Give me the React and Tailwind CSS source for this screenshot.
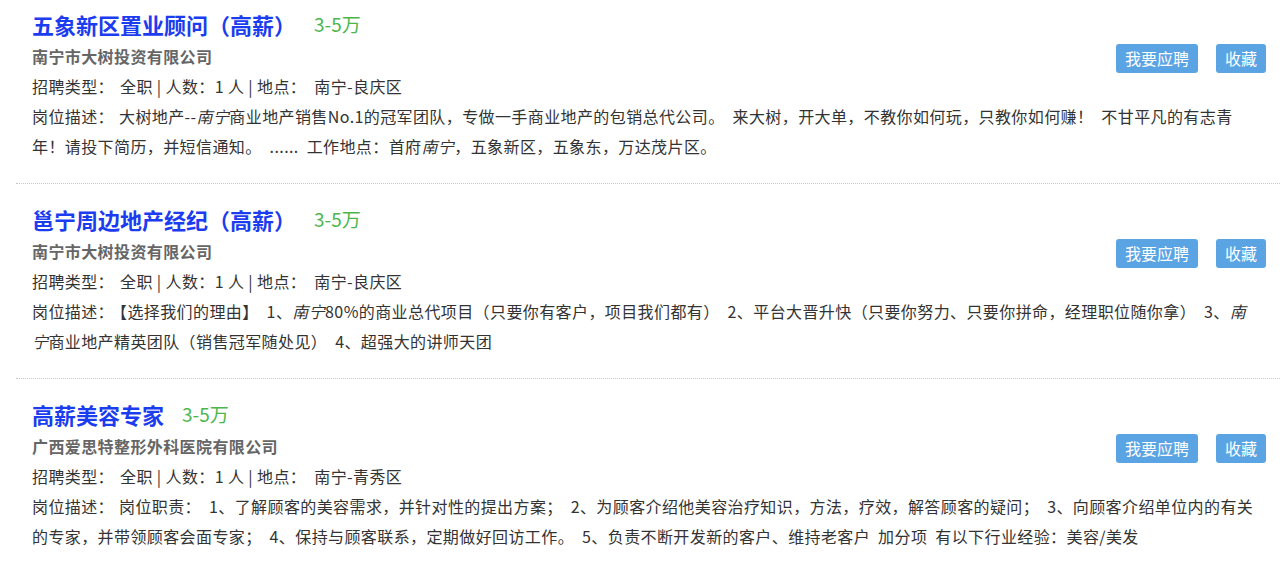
import React from 'react';

const JOBS = [
  {
    id: 1,
    title: '五象新区置业顾问（高薪）',
    salary: '3-5万',
    company: '南宁市大树投资有限公司',
    district: '南宁-良庆区',
    desc: [
      '大树地产--',
      { em: '南宁' },
      '商业地产销售No.1的冠军团队，专做一手商业地产的包销总代公司。 来大树，开大单，不教你如何玩，只教你如何赚！ 不甘平凡的有志青年！请投下简历，并短信通知。 ...... 工作地点：首府',
      { em: '南宁' },
      '，五象新区，五象东，万达茂片区。',
    ],
  },
  {
    id: 2,
    title: '邕宁周边地产经纪（高薪）',
    salary: '3-5万',
    company: '南宁市大树投资有限公司',
    district: '南宁-良庆区',
    desc: [
      '【选择我们的理由】 1、',
      { em: '南宁' },
      '80%的商业总代项目（只要你有客户，项目我们都有） 2、平台大晋升快（只要你努力、只要你拼命，经理职位随你拿） 3、',
      { em: '南宁' },
      '商业地产精英团队（销售冠军随处见） 4、超强大的讲师天团',
    ],
  },
  {
    id: 3,
    title: '高薪美容专家',
    salary: '3-5万',
    company: '广西爱思特整形外科医院有限公司',
    district: '南宁-青秀区',
    desc: [
      '岗位职责： 1、了解顾客的美容需求，并针对性的提出方案； 2、为顾客介绍他美容治疗知识，方法，疗效，解答顾客的疑问； 3、向顾客介绍单位内的有关的专家，并带领顾客会面专家； 4、保持与顾客联系，定期做好回访工作。 5、负责不断开发新的客户、维持老客户 加分项 有以下行业经验：美容/美发',
    ],
  },
];

function JobItem({ job, first }) {
  return (
    <li
      className={`border-b border-dotted border-[#c8c8c8] pl-4 pr-[14px] pb-[22px] ${
        first ? 'pt-[7px]' : 'pt-[18px]'
      }`}
    >
      <div className="flex justify-between">
        <div>
          <h3 className="flex items-center h-[34px]">
            <a href="#" className="text-[22px] font-bold text-[#1c3cf0] leading-[34px]">
              {job.title}
            </a>
            <span className="ml-[18px] text-[19px] text-[#4cb64c] leading-[34px]">{job.salary}</span>
          </h3>
          <p className="text-[16px] font-bold text-[#666] leading-[30px] tracking-[0.4px]">{job.company}</p>
          <p className="text-[16px] text-[#333] leading-[30px] tracking-[0.4px]">
            <span className="mr-[6px]">招聘类型：</span>
            <span className="mr-[8px]">全职 | 人数：1 人 | 地点：</span>
            <span>{job.district}</span>
          </p>
        </div>
        <div className="flex gap-[18px] pt-[37px]">
          <button
            type="button"
            className="h-[29px] px-[9px] rounded-[3px] bg-[#5ba4e4] text-white text-[16px] leading-[29px]"
          >
            我要应聘
          </button>
          <button
            type="button"
            className="h-[29px] px-[9px] rounded-[3px] bg-[#5ba4e4] text-white text-[16px] leading-[29px]"
          >
            收藏
          </button>
        </div>
      </div>
      <p className="mr-[8px] text-[16px] text-[#333] leading-[30px] tracking-[0.4px] [word-spacing:4px]">
        <span className="mr-[5px]">岗位描述：</span>
        {job.desc.map((part, i) =>
          typeof part === 'string' ? <React.Fragment key={i}>{part}</React.Fragment> : <em key={i}>{part.em}</em>
        )}
      </p>
    </li>
  );
}

export default function App() {
  return (
    <div className="min-h-screen bg-white font-['Microsoft_YaHei','Noto_Sans_CJK_SC',sans-serif]">
      <ul className="ml-4 mr-[7px]">
        {JOBS.map((job, i) => (
          <JobItem key={job.id} job={job} first={i === 0} />
        ))}
      </ul>
    </div>
  );
}
